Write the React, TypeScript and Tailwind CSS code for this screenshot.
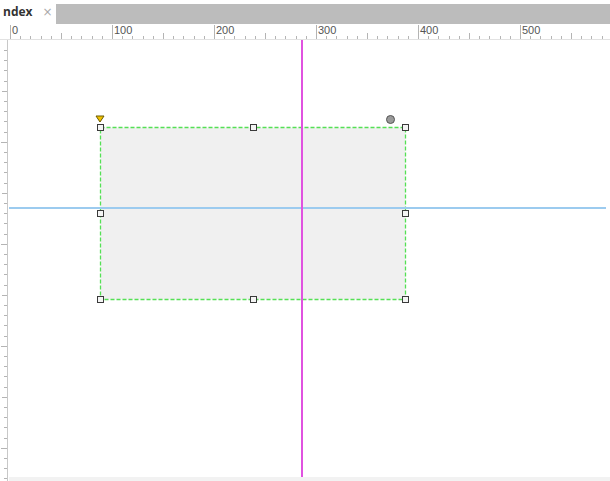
import React from 'react';

const ORIGIN = 10;
const SCALE = 1.02;

const TopRuler: React.FC = () => {
  const ticks = Array.from({ length: 60 }, (_, i) => i);
  return (
    <svg width={610} height={16} className="block">
      <line x1={0} y1={15.5} x2={610} y2={15.5} stroke="#e2e2e2" />
      {ticks.map((i) => {
        const x = Math.round(ORIGIN + i * 10 * SCALE) + 0.5;
        const len = i % 10 === 0 ? 14 : i % 5 === 0 ? 6 : 3;
        return <line key={i} x1={x} y1={15 - len} x2={x} y2={15} stroke="#b4b4b4" />;
      })}
      {[0, 100, 200, 300, 400, 500].map((v) => (
        <text
          key={v}
          x={Math.round(ORIGIN + v * SCALE) + 2}
          y={10}
          fontSize={11}
          fill="#555"
          fontFamily="Liberation Sans, Arial, sans-serif"
        >
          {v}
        </text>
      ))}
    </svg>
  );
};

const LeftRuler: React.FC = () => {
  const ticks = Array.from({ length: 45 }, (_, i) => i);
  return (
    <svg width={9} height={441} className="block shrink-0">
      <line x1={7.5} y1={0} x2={7.5} y2={441} stroke="#c8c8c8" />
      {ticks.map((i) => {
        const y = Math.round(10 + i * 10.2) + 0.5;
        const len = i % 10 === 9 ? 6 : i % 5 === 4 ? 5 : 3;
        return <line key={i} x1={7 - len} y1={y} x2={7} y2={y} stroke="#b4b4b4" />;
      })}
    </svg>
  );
};

const Handle: React.FC<{ x: number; y: number }> = ({ x, y }) => (
  <div
    className="absolute w-[7px] h-[7px] border border-[#3a3a3a] bg-[#f4f4f4]"
    style={{ left: x - 3, top: y - 3 }}
  ></div>
);

export default function App() {
  // rectangle in canvas coords (canvas origin = page 9,40)
  const L = 91;
  const T = 87;
  const W = 305;
  const H = 172;
  const handles = [
    [L, T], [L + W / 2, T], [L + W, T],
    [L, T + H / 2], [L + W, T + H / 2],
    [L, T + H], [L + W / 2, T + H], [L + W, T + H],
  ];

  return (
    <div className="w-[610px] h-[481px] bg-white overflow-hidden flex flex-col">
      {/* tab strip */}
      <div className="h-6 flex items-end shrink-0">
        <div className="h-6 w-[56px] flex items-center pl-[3px] gap-[10px]">
          <span className="text-[12px] font-bold text-[#333] font-['Open_Sans',sans-serif] leading-none">ndex</span>
          <span className="text-[12px] text-[#aaa] font-['DejaVu_Sans',sans-serif] leading-none">×</span>
        </div>
        <div className="flex-1 h-5 bg-[#bcbcbc]"></div>
      </div>

      {/* horizontal ruler */}
      <div className="h-4 shrink-0">
        <TopRuler />
      </div>

      {/* body */}
      <div className="flex flex-1">
        <LeftRuler />
        <div className="relative flex-1 bg-white">
          {/* shape */}
          <svg className="absolute" style={{ left: L - 1, top: T - 1 }} width={W + 3} height={H + 3}>
            <rect
              x={1.5}
              y={1.5}
              width={W}
              height={H}
              fill="#f0f0f0"
              stroke="#55e055"
              strokeWidth={1.3}
              strokeDasharray="4 2"
            />
          </svg>

          {/* guides */}
          <div className="absolute left-0 right-[4px] top-[167px] h-[2px] bg-[#9ccbef]"></div>
          <div className="absolute top-0 bottom-[4px] left-[292px] w-[2px] bg-[#e052e0]"></div>

          {handles.map(([x, y], i) => (
            <Handle key={i} x={x} y={y} />
          ))}

          {/* yellow triangle */}
          <svg className="absolute" style={{ left: L - 5, top: T - 12 }} width={10} height={8}>
            <polygon points="1,1 9,1 5,7" fill="#f2c200" stroke="#6b5a00" strokeWidth={1} />
          </svg>

          {/* rotate knob */}
          <div className="absolute w-[9px] h-[9px] rounded-full bg-[#9a9a9a] border border-[#555]" style={{ left: 377, top: 75 }}></div>

          {/* bottom strip */}
          <div className="absolute left-0 right-0 bottom-0 h-[4px] bg-[#f2f2f2]"></div>
        </div>
      </div>
    </div>
  );
}
